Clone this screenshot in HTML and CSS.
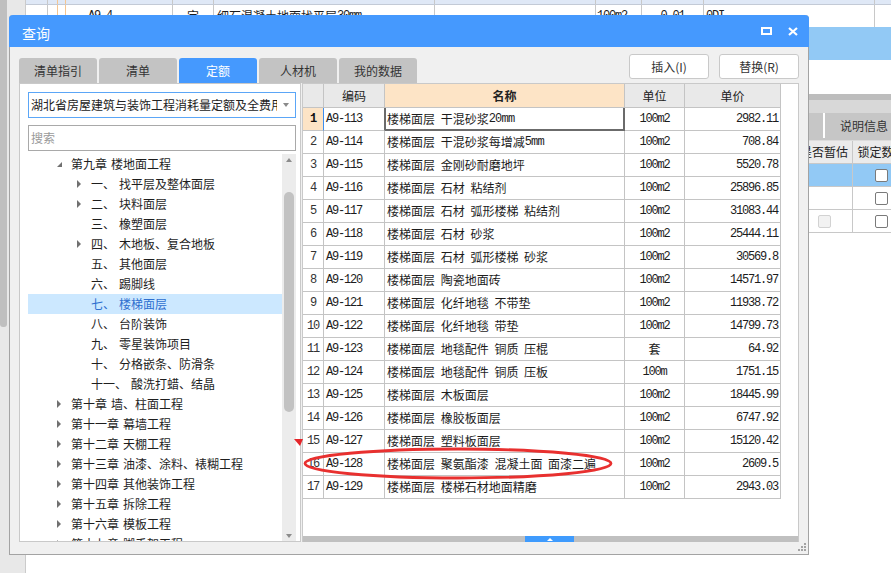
FILE: index.html
```html
<!DOCTYPE html>
<html lang="zh-CN">
<head>
<meta charset="utf-8">
<title>查询</title>
<link rel="stylesheet" href="styles.css">
</head>
<body>
<div class="app">
  <div class="gutter"><div class="gutter-thumb"></div></div>
  <div class="main">
    <div class="brow bhead">
      <span class="bc w1"></span><span class="bc w2 orange"></span><span class="bc w3 orange"></span><span class="bc w4"></span><span class="bc w5"></span><span class="bc w6"></span><span class="bc w7"></span><span class="bc w8"></span><span class="bc w9"></span><span class="bc w10"></span><span class="bc w11"></span>
    </div>
    <div class="brow bdata">
      <span class="bc w1"></span><span class="bc w2 orange"></span><span class="bc w3 orange"></span><span class="bc w4 mono">A9-4</span><span class="bc w5">定</span><span class="bc w6">细石混凝土地面找平层<span class="mono">30mm</span></span><span class="bc w7"></span><span class="bc w8 mono">100m2</span><span class="bc w9 mono">0.01</span><span class="bc w10 mono">0DI</span><span class="bc w11"></span>
    </div>
    <div class="bsel"></div>
    <div class="bgap"></div>
    <div class="bsplit"></div>
    <div class="btabs"><span class="btab-sep"></span><span class="btab">说明信息</span></div>
    <div class="bgrid">
      <div class="hd"></div><div class="hd">是否暂估</div><div class="hd">锁定数量</div>
      <div class="sel"></div><div class="sel"></div><div class="sel"><span class="cb"></span></div>
      <div></div><div></div><div><span class="cb"></span></div>
      <div></div><div><span class="cb off"></span></div><div><span class="cb"></span></div>
    </div>
  </div>
</div>

<div class="dialog">
  <div class="titlebar">
    <span class="title">查询</span>
    <span class="tb-icons">
      <svg width="11" height="8" viewBox="0 0 11 8"><rect x="1" y="1" width="9" height="6" fill="none" stroke="#fff" stroke-width="2"/></svg>
      <svg width="10" height="9" viewBox="0 0 10 9"><path d="M1 1 L9 8 M9 1 L1 8" stroke="#fff" stroke-width="2.2" fill="none"/></svg>
    </span>
  </div>
  <div class="dbody">
    <div class="toolbar">
      <div class="tabs">
        <span class="tab">清单指引</span>
        <span class="tab">清单</span>
        <span class="tab on">定额</span>
        <span class="tab">人材机</span>
        <span class="tab">我的数据</span>
      </div>
      <div class="btns">
        <span class="btn">插入(I)</span>
        <span class="btn">替换(R)</span>
      </div>
    </div>
    <div class="panels">
      <div class="lpanel">
        <div class="combo"><span class="combo-text">湖北省房屋建筑与装饰工程消耗量定额及全费用基价表(2018)</span><span class="combo-arrow"></span></div>
        <div class="search">搜索</div>
        <div class="tree">
          <div class="tree-list">
            <div class="node l0"><span class="tw open"></span><span class="n">第九章</span>楼地面工程</div>
            <div class="node l1"><span class="tw closed"></span><span class="n">一、</span>找平层及整体面层</div>
            <div class="node l1"><span class="tw closed"></span><span class="n">二、</span>块料面层</div>
            <div class="node l1"><span class="tw"></span><span class="n">三、</span>橡塑面层</div>
            <div class="node l1"><span class="tw closed"></span><span class="n">四、</span>木地板、复合地板</div>
            <div class="node l1"><span class="tw"></span><span class="n">五、</span>其他面层</div>
            <div class="node l1"><span class="tw"></span><span class="n">六、</span>踢脚线</div>
            <div class="node l1 sel"><span class="tw"></span><span class="n">七、</span>楼梯面层</div>
            <div class="node l1"><span class="tw"></span><span class="n">八、</span>台阶装饰</div>
            <div class="node l1"><span class="tw"></span><span class="n">九、</span>零星装饰项目</div>
            <div class="node l1"><span class="tw"></span><span class="n">十、</span>分格嵌条、防滑条</div>
            <div class="node l1"><span class="tw"></span><span class="n">十一、</span>酸洗打蜡、结晶</div>
            <div class="node l0"><span class="tw closed"></span><span class="n">第十章</span>墙、柱面工程</div>
            <div class="node l0"><span class="tw closed"></span><span class="n">第十一章</span>幕墙工程</div>
            <div class="node l0"><span class="tw closed"></span><span class="n">第十二章</span>天棚工程</div>
            <div class="node l0"><span class="tw closed"></span><span class="n">第十三章</span>油漆、涂料、裱糊工程</div>
            <div class="node l0"><span class="tw closed"></span><span class="n">第十四章</span>其他装饰工程</div>
            <div class="node l0"><span class="tw closed"></span><span class="n">第十五章</span>拆除工程</div>
            <div class="node l0"><span class="tw closed"></span><span class="n">第十六章</span>模板工程</div>
            <div class="node l0"><span class="tw closed"></span><span class="n">第十七章</span>脚手架工程</div>
          </div>
          <div class="tree-bar">
            <span class="sb-up"></span>
            <span class="sb-thumb"></span>
            <span class="sb-fill"></span>
            <span class="sb-down"></span>
          </div>
        </div>
      </div>
      <div class="rpanel">
        <div class="tbl">
          <div class="h"></div><div class="h">编码</div><div class="h hname">名称</div><div class="h">单位</div><div class="h">单价</div>

          <div class="rn r1 mono">1</div><div class="code r1 mono">A9-113</div><div class="name focus">楼梯面层 干混砂浆<span class="mono">20mm</span></div><div class="unit mono">100m2</div><div class="price mono">2982.11</div>
          <div class="rn mono">2</div><div class="code mono">A9-114</div><div class="name">楼梯面层 干混砂浆每增减<span class="mono">5mm</span></div><div class="unit mono">100m2</div><div class="price mono">708.84</div>
          <div class="rn mono">3</div><div class="code mono">A9-115</div><div class="name">楼梯面层 金刚砂耐磨地坪</div><div class="unit mono">100m2</div><div class="price mono">5520.78</div>
          <div class="rn mono">4</div><div class="code mono">A9-116</div><div class="name">楼梯面层 石材 粘结剂</div><div class="unit mono">100m2</div><div class="price mono">25896.85</div>
          <div class="rn mono">5</div><div class="code mono">A9-117</div><div class="name">楼梯面层 石材 弧形楼梯 粘结剂</div><div class="unit mono">100m2</div><div class="price mono">31083.44</div>
          <div class="rn mono">6</div><div class="code mono">A9-118</div><div class="name">楼梯面层 石材 砂浆</div><div class="unit mono">100m2</div><div class="price mono">25444.11</div>
          <div class="rn mono">7</div><div class="code mono">A9-119</div><div class="name">楼梯面层 石材 弧形楼梯 砂浆</div><div class="unit mono">100m2</div><div class="price mono">30569.8</div>
          <div class="rn mono">8</div><div class="code mono">A9-120</div><div class="name">楼梯面层 陶瓷地面砖</div><div class="unit mono">100m2</div><div class="price mono">14571.97</div>
          <div class="rn mono">9</div><div class="code mono">A9-121</div><div class="name">楼梯面层 化纤地毯 不带垫</div><div class="unit mono">100m2</div><div class="price mono">11938.72</div>
          <div class="rn mono">10</div><div class="code mono">A9-122</div><div class="name">楼梯面层 化纤地毯 带垫</div><div class="unit mono">100m2</div><div class="price mono">14799.73</div>
          <div class="rn mono">11</div><div class="code mono">A9-123</div><div class="name">楼梯面层 地毯配件 铜质 压棍</div><div class="unit">套</div><div class="price mono">64.92</div>
          <div class="rn mono">12</div><div class="code mono">A9-124</div><div class="name">楼梯面层 地毯配件 铜质 压板</div><div class="unit mono">100m</div><div class="price mono">1751.15</div>
          <div class="rn mono">13</div><div class="code mono">A9-125</div><div class="name">楼梯面层 木板面层</div><div class="unit mono">100m2</div><div class="price mono">18445.99</div>
          <div class="rn mono">14</div><div class="code mono">A9-126</div><div class="name">楼梯面层 橡胶板面层</div><div class="unit mono">100m2</div><div class="price mono">6747.92</div>
          <div class="rn mono">15</div><div class="code mono">A9-127</div><div class="name">楼梯面层 塑料板面层</div><div class="unit mono">100m2</div><div class="price mono">15120.42</div>
          <div class="rn mono">16</div><div class="code mono">A9-128</div><div class="name">楼梯面层 聚氨酯漆 混凝土面 面漆二遍</div><div class="unit mono">100m2</div><div class="price mono">2609.5</div>
          <div class="rn mono">17</div><div class="code mono">A9-129</div><div class="name">楼梯面层 楼梯石材地面精磨</div><div class="unit mono">100m2</div><div class="price mono">2943.03</div>
        </div>
        <div class="tfill"></div>
        <div class="hscroll"><span class="hthumb"></span></div>
      </div>
    </div>
    <div class="dfoot">
      <svg width="9" height="9" viewBox="0 0 9 9"><g fill="#a3a3a3"><rect x="7" y="0" width="2" height="2"/><rect x="4" y="3" width="2" height="2"/><rect x="7" y="3" width="2" height="2"/><rect x="1" y="6" width="2" height="2"/><rect x="4" y="6" width="2" height="2"/><rect x="7" y="6" width="2" height="2"/></g></svg>
    </div>
  </div>
</div>

<svg class="marks" width="891" height="573" viewBox="0 0 891 573">
  <polygon points="294,439 303,439 300,446" fill="#e5262a"/>
  <ellipse cx="458" cy="463.5" rx="153" ry="14.5" fill="none" stroke="#e8302f" stroke-width="2.8"/>
</svg>
</body>
</html>
```

FILE: styles.css
```css
* { box-sizing: border-box; }
html, body { margin: 0; padding: 0; }
body {
  width: 891px;
  height: 573px;
  overflow: hidden;
  position: relative;
  background: #fff;
  color: #1c1c1c;
  font-family: "Noto Sans CJK SC", "Noto Sans", sans-serif;
  font-size: 12px;
  line-height: 1;
}
.mono {
  font-family: "Liberation Mono", "Noto Sans CJK SC", monospace;
  font-size: 12px;
  letter-spacing: -1.2px;
  word-spacing: 0;
}

/* ---------- background application ---------- */
.app { display: flex; height: 573px; }
.gutter { width: 26px; flex: none; background: #e8e8e8; border-right: 1px solid #cbcbcb; }
.gutter-thumb { width: 7px; height: 327px; background: #bfbfbf; border-radius: 0 0 3px 3px; }
.main { flex: 1; min-width: 0; display: flex; flex-direction: column; }
.brow { display: flex; flex: none; }
.bhead { height: 5px; background: #dfe8f6; border-bottom: 1px solid #c3cad6; }
.bdata { height: 22px; }
.bc {
  flex: none;
  border-right: 1px solid #c8c8c8;
  display: flex;
  align-items: center;
  white-space: nowrap;
  overflow: hidden;
}
.bc.orange { border-right-color: #f5c590; }
.w1 { width: 22px; }
.w2 { width: 10px; }
.w3 { width: 8px; }
.w4 { width: 107px; padding-left: 22px; }
.w5 { width: 41px; justify-content: center; }
.w6 { width: 221px; padding-left: 3px; }
.w7 { width: 161px; }
.w8 { width: 46px; padding-left: 1px; }
.w9 { width: 62px; justify-content: center; }
.w10 { width: 171px; padding-left: 2px; }
.w11 { flex: 1; border-right: 0; }
.bsel { height: 33px; flex: none; background: #92c9f5; }
.bgap { height: 34px; flex: none; }
.bsplit { height: 6px; flex: none; background: #bdbdbd; }
.btabs {
  height: 41px;
  flex: none;
  display: flex;
  align-items: flex-end;
  padding: 0 0 2px 797px;
  background: linear-gradient(#d8d8d8 0 13px, #c6c6c6 13px);
  border-bottom: 1px solid #dcdcdc;
}
.btab-sep { width: 2px; height: 25px; background: #fff; flex: none; }
.btab { height: 25px; display: flex; align-items: center; padding-left: 15px; color: #333; white-space: nowrap; }
.bgrid {
  display: grid;
  grid-template-columns: 770px 57px 58px;
  grid-auto-rows: 23px;
  width: 885px;
  flex: none;
}
.bgrid > div {
  border-right: 1px solid #c8c8c8;
  border-bottom: 1px solid #c8c8c8;
  display: flex;
  align-items: center;
  justify-content: center;
  white-space: nowrap;
  overflow: hidden;
}
.bgrid .hd { background: #ebebeb; color: #222; }
.bgrid .sel { background: #92c9f5; }
.cb {
  width: 13px;
  height: 13px;
  background: #fff;
  border: 1px solid #7a7a7a;
  border-radius: 2px;
}
.cb.off { background: #f2f2f2; border-color: #d2d2d2; }

/* ---------- dialog window ---------- */
.dialog {
  position: absolute;
  left: 9px;
  top: 15px;
  width: 800px;
  height: 540px;
  background: #f0f0f0;
  border: 1px solid #a3a3a3;
  border-top: 0;
  border-radius: 4px 4px 0 0;
  display: flex;
  flex-direction: column;
}
.titlebar {
  height: 32px;
  flex: none;
  margin: 0 -1px;
  background: #4599fe;
  border-radius: 4px 4px 0 0;
  display: flex;
  align-items: center;
  padding: 0 11px 0 13px;
  color: #fff;
}
.title { flex: 1; font-size: 14px; padding-top: 3px; }
.tb-icons { display: flex; align-items: center; gap: 16px; }
.tb-icons svg { display: block; }

.dbody { flex: 1; display: flex; flex-direction: column; padding: 7px 9px 0 9px; min-height: 0; }
.toolbar { height: 29px; flex: none; display: flex; justify-content: space-between; }
.tabs { display: flex; gap: 2px; align-self: flex-end; }
.tab {
  width: 78px;
  height: 25px;
  background: #c3c3c3;
  border-radius: 3px 3px 0 0;
  display: flex;
  align-items: center;
  justify-content: center;
  color: #333;
}
.tab.on { background: #4599fe; color: #fff; }
.btns { display: flex; gap: 10px; align-self: flex-start; }
.btn {
  width: 80px;
  height: 25px;
  background: #fff;
  border: 1px solid #c9c9c9;
  border-radius: 3px;
  display: flex;
  align-items: center;
  justify-content: center;
  color: #333;
}

.panels { height: 459px; flex: none; display: flex; gap: 1px; }

.lpanel {
  width: 282px;
  flex: none;
  background: #fff;
  border: 1px solid #c9c9c9;
  padding: 8px 4px 0 8px;
  display: flex;
  flex-direction: column;
  min-height: 0;
}
.combo { height: 26px; flex: none; border: 1px solid #5ba6f7; display: flex; align-items: center; }
.combo-text { flex: 1; overflow: hidden; white-space: nowrap; padding-left: 2px; color: #222; }
.combo-arrow { width: 18px; flex: none; display: flex; justify-content: center; }
.combo-arrow::before {
  content: "";
  border-left: 3px solid transparent;
  border-right: 3px solid transparent;
  border-top: 4px solid #8a8a8a;
}
.search {
  height: 26px;
  flex: none;
  margin-top: 7px;
  border: 1px solid #a9a9a9;
  display: flex;
  align-items: center;
  padding-left: 2px;
  color: #9a9a9a;
}
.tree { flex: 1; min-height: 0; margin-top: 3px; display: flex; overflow: hidden; }
.tree-list { flex: 1; overflow: hidden; }
.node { height: 20px; display: flex; align-items: center; white-space: nowrap; color: #1e1e1e; }
.node.l0 { padding-left: 27px; }
.node.l1 { padding-left: 47px; }
.node.sel { background: #cce8ff; color: #2e6fcf; }
.tw { width: 16px; flex: none; display: flex; align-items: center; padding-left: 2px; }
.tw.closed::before {
  content: "";
  border-top: 4px solid transparent;
  border-bottom: 4px solid transparent;
  border-left: 4px solid #707070;
}
.tw.open::before {
  content: "";
  border-left: 5px solid transparent;
  border-bottom: 5px solid #707070;
}
.n { margin-right: 4px; }
.tree-bar {
  width: 14px;
  flex: none;
  background: #ececec;
  display: flex;
  flex-direction: column;
  align-items: center;
}
.sb-up {
  margin-top: 4px;
  border-left: 3px solid transparent;
  border-right: 3px solid transparent;
  border-bottom: 4px solid #8c8c8c;
}
.sb-thumb { width: 10px; height: 220px; margin-top: 30px; background: #c2c2c2; border-radius: 5px; }
.sb-fill { flex: 1; }
.sb-down {
  margin-bottom: 3px;
  border-left: 3px solid transparent;
  border-right: 3px solid transparent;
  border-top: 4px solid #8c8c8c;
}

.rpanel {
  flex: 1;
  min-width: 0;
  background: #fff;
  border: 1px solid #c9c9c9;
  border-bottom: 0;
  display: flex;
  flex-direction: column;
}
.tbl {
  display: grid;
  grid-template-columns: 21px 61px 240px 60px 96px;
  grid-template-rows: 24px;
  grid-auto-rows: 23px;
  width: 478px;
  flex: none;
}
.tbl > div {
  border-right: 1px solid #c4c4c4;
  border-bottom: 1px solid #c4c4c4;
  display: flex;
  align-items: center;
  white-space: nowrap;
  overflow: hidden;
}
.tbl .h { background: #e9e9e9; justify-content: center; color: #222; }
.tbl .hname { background: #fde4c6; font-weight: bold; }
.rn { justify-content: center; color: #333; }
.rn.r1 { background: #fde4c6; font-weight: bold; color: #111; border-right-color: #3d8ef0; }
.code { padding-left: 2px; }
.code.r1 { border-right-color: #6b6b6b; }
.name { padding-left: 2px; word-spacing: 3px; }
.name .mono { letter-spacing: -0.8px; }
.name.focus {
  border-right-color: #6b6b6b;
  border-bottom-color: #6b6b6b;
  box-shadow: inset 1px 0 #6b6b6b, inset -1px 0 #6b6b6b, inset 0 -1px #6b6b6b;
}
.unit { justify-content: center; }
.price { justify-content: flex-end; padding-right: 2px; }
.tfill { flex: 1; }
.hscroll { height: 6px; flex: none; background: #c0c0c0; display: flex; padding-left: 222px; }
.hthumb { width: 49px; background: #3f9bfd; display: flex; justify-content: center; align-items: center; }
.hthumb::before {
  content: "";
  border-left: 3px solid transparent;
  border-right: 3px solid transparent;
  border-bottom: 3px solid #fff;
}
.dfoot { flex: 1; display: flex; justify-content: flex-end; align-items: flex-start; padding-top: 1px; margin-right: -7px; }
.dfoot svg { display: block; }

/* ---------- annotation overlay ---------- */
.marks { position: absolute; left: 0; top: 0; pointer-events: none; }
```
